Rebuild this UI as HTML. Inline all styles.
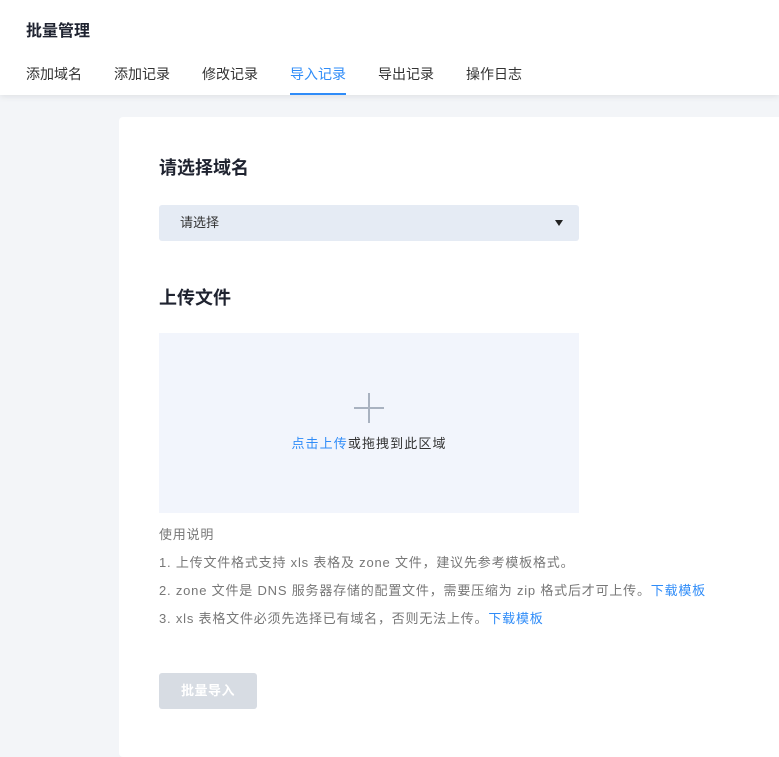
<!DOCTYPE html>
<html><head><meta charset="utf-8"><style>
*{margin:0;padding:0;box-sizing:border-box}
body{width:779px;height:738px;overflow:hidden;background:#f3f5f8;font-family:"Liberation Sans","Noto Sans CJK SC",sans-serif;position:relative}
.hd{position:absolute;left:0;top:0;width:779px;height:95px;background:#fff;box-shadow:0 2px 6px rgba(0,0,0,.08);z-index:2}
.t{position:absolute;left:26px;top:17px;font-size:16px;font-weight:bold;color:#1f2330}
.tab{position:absolute;top:64px;font-size:14px;color:#333;line-height:20px}
.tab.a{color:#2f8cf8}
.ul{position:absolute;left:290px;top:93px;width:56px;height:2px;background:#2f8cf8}
.card{position:absolute;left:119px;top:117px;width:680px;height:640px;background:#fff;border-radius:4px}
.h{position:absolute;left:159px;font-size:18px;font-weight:bold;color:#1f2330;line-height:24px}
.sel{position:absolute;left:159px;top:205px;width:420px;height:36px;background:#e5ebf4;border-radius:3px;font-size:13px;color:#333;line-height:36px;padding-left:21px}
.arr{position:absolute;right:16px;top:15px;width:0;height:0;border-left:4px solid transparent;border-right:4px solid transparent;border-top:6px solid #222}
.up{position:absolute;left:159px;top:333px;width:420px;height:180px;background:#f2f5fc}
.txt{position:absolute;left:0;width:420px;top:100px;text-align:center;font-size:13px;letter-spacing:1.1px;color:#333}
.b{color:#2f8cf8}
.ins{position:absolute;left:159px;font-size:13px;letter-spacing:.8px;color:#777;line-height:18px;white-space:nowrap}
.btn{position:absolute;left:159px;top:673px;width:98px;height:36px;background:#d7dce3;border-radius:3px;color:#fff;font-size:13px;font-weight:bold;text-align:center;line-height:36px;letter-spacing:.5px}
</style></head><body>
<div class="hd">
<div class="t">批量管理</div>
<div class="tab" style="left:26px">添加域名</div>
<div class="tab" style="left:114px">添加记录</div>
<div class="tab" style="left:202px">修改记录</div>
<div class="tab a" style="left:290px">导入记录</div>
<div class="tab" style="left:378px">导出记录</div>
<div class="tab" style="left:466px">操作日志</div>
<div class="ul"></div>
</div>
<div class="card"></div>
<div class="h" style="top:156px">请选择域名</div>
<div class="sel">请选择<div class="arr"></div></div>
<div class="h" style="top:286px">上传文件</div>
<div class="up">
<svg style="position:absolute;left:194px;top:59px" width="32" height="32"><path d="M16 1V31M1 16H31" stroke="#a9b2c0" stroke-width="2"/></svg>
<div class="txt"><span class="b">点击上传</span>或拖拽到此区域</div>
</div>
<div class="ins" style="top:526px">使用说明</div>
<div class="ins" style="top:554px">1. 上传文件格式支持 xls 表格及 zone 文件，建议先参考模板格式。</div>
<div class="ins" style="top:582px">2. zone 文件是 DNS 服务器存储的配置文件，需要压缩为 zip 格式后才可上传。<span class="b">下载模板</span></div>
<div class="ins" style="top:610px">3. xls 表格文件必须先选择已有域名，否则无法上传。<span class="b">下载模板</span></div>
<div class="btn">批量导入</div>
</body></html>
